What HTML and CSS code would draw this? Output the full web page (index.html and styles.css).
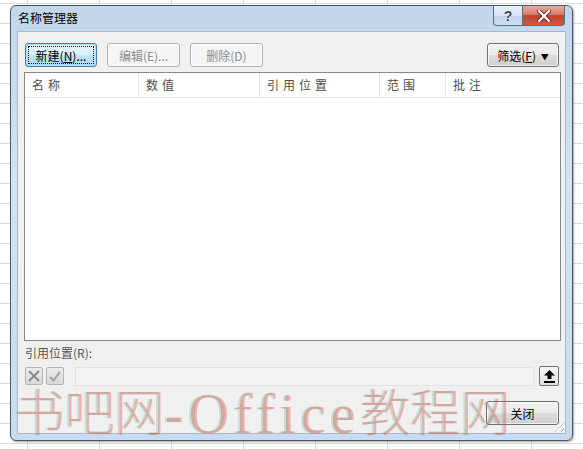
FILE: index.html
```html
<!DOCTYPE html>
<html lang="zh-CN">
<head>
    <meta charset="UTF-8">
    <title>名称管理器</title>
    <link rel="stylesheet" href="styles.css">
</head>
<body>
    <div class="dialog">
        <div class="titlebar">
            <span class="title">名称管理器</span>
            <div class="caption-buttons">
                <button class="cap help">?</button>
                <button class="cap close">
                    <svg width="14" height="12" viewBox="0 0 14 12">
                        <path d="M2 1 L12 11 M12 1 L2 11" stroke="#5a1f1f" stroke-width="4" stroke-linecap="round"/>
                        <path d="M2 1 L12 11 M12 1 L2 11" stroke="#fff" stroke-width="2.4" stroke-linecap="round"/>
                    </svg>
                </button>
            </div>
        </div>

        <div class="client">
            <div class="toolbar">
                <button class="btn btn-default"><span class="focus">新建(<u>N</u>)...</span></button>
                <button class="btn" disabled>编辑(E)...</button>
                <button class="btn" disabled>删除(D)</button>
                <span class="spacer"></span>
                <button class="btn btn-filter">筛选(<u>F</u>) <span class="arrow">&#9660;</span></button>
            </div>

            <div class="listbox">
                <div class="list-head">
                    <div class="col">名称</div>
                    <div class="col">数值</div>
                    <div class="col">引用位置</div>
                    <div class="col">范围</div>
                    <div class="col">批注</div>
                </div>
            </div>

            <div class="ref-label">引用位置(R):</div>
            <div class="ref-row">
                <button class="icon-btn" disabled>
                    <svg width="14" height="14" viewBox="0 0 14 14">
                        <path d="M2 2 L12 12 M12 2 L2 12" stroke="#8a8a8a" stroke-width="2"/>
                    </svg>
                </button>
                <button class="icon-btn" disabled>
                    <svg width="14" height="14" viewBox="0 0 14 14">
                        <path d="M2 8 L5.5 11.5 L12 3" stroke="#a8a8a8" stroke-width="2.4" fill="none"/>
                    </svg>
                </button>
                <div class="ref-input"></div>
                <button class="up-btn">
                    <svg width="11" height="13" viewBox="0 0 11 13">
                        <path d="M5.5 0 L11 5.5 L7.5 5.5 L7.5 9 L3.5 9 L3.5 5.5 L0 5.5 Z" fill="#000"/>
                        <rect x="0" y="11" width="11" height="2" fill="#000"/>
                    </svg>
                </button>
            </div>

            <div class="footer">
                <button class="btn btn-close">关闭</button>
            </div>
            <div class="grip"></div>
        </div>

        <div class="watermark">书吧网<span class="latin">-Office</span>教程网</div>
    </div>
</body>
</html>
```

FILE: styles.css
```css
body {
    margin: 0;
    height: 449px;
    overflow: hidden;
    font-family: "Noto Sans CJK SC", "Microsoft YaHei", sans-serif;
    font-size: 12px;
    background-color: #fff;
    background-image:
        linear-gradient(to right, #dadcdd 1px, transparent 1px),
        linear-gradient(to bottom, #dadcdd 1px, transparent 1px);
    background-size: 72px 100%, 100% 20px;
    background-position: 27px 0, 0 3px;
}

.dialog {
    position: relative;
    box-sizing: border-box;
    width: 563px;
    height: 436px;
    margin: 5px 0 0 10px;
    border: 1px solid #4b5866;
    border-radius: 6px;
    background: linear-gradient(180deg, #c2d6ee 0%, #d3e2f4 40%, #c9dbf0 100%);
    box-shadow: 1px 1px 2px rgba(0, 0, 0, 0.35);
    display: flex;
    flex-direction: column;
}

.titlebar {
    height: 25px;
    display: flex;
    justify-content: space-between;
    align-items: flex-start;
    padding: 0 7px 0 7px;
}

.title {
    color: #000;
    font-size: 12px;
    line-height: 24px;
}

.caption-buttons {
    display: flex;
}

.cap {
    height: 20px;
    margin: 0;
    padding: 0;
    border: 1px solid #5f6d7e;
    border-top: none;
    cursor: default;
    display: flex;
    align-items: center;
    justify-content: center;
}

.cap.help {
    width: 29px;
    border-right: none;
    border-radius: 0 0 0 4px;
    background: linear-gradient(180deg, #e9f1fa 0%, #d5e3f3 50%, #bfd3ea 51%, #cfdff1 100%);
    color: #3b4b5b;
    font-family: "Liberation Sans", sans-serif;
    font-size: 14px;
    font-weight: bold;
    text-shadow: 0 0 2px #fff;
}

.cap.close {
    width: 43px;
    border-radius: 0 0 4px 0;
    background: linear-gradient(180deg, #e9a99c 0%, #d47a6a 45%, #c2412f 50%, #d4573f 100%);
}

.client {
    flex: 1;
    margin: 0 6px 6px 6px;
    border: 1px solid #a7b8cb;
    background: #f0f0f0;
    padding: 11px 4px 0 6px;
    display: flex;
    flex-direction: column;
    position: relative;
}

.toolbar {
    display: flex;
    align-items: center;
    height: 24px;
}

.btn {
    box-sizing: border-box;
    height: 24px;
    width: 73px;
    padding: 0;
    margin: 0;
    font-family: "Noto Sans CJK SC", sans-serif;
    font-size: 12px;
    color: #000;
    border: 1px solid #707070;
    border-radius: 3px;
    background: linear-gradient(180deg, #f2f2f2 0%, #ebebeb 50%, #dddddd 51%, #cfcfcf 100%);
    box-shadow: inset 0 0 0 1px rgba(255, 255, 255, 0.7);
}

.btn u {
    text-decoration: underline;
}

.btn:disabled {
    color: #8d8d8d;
    border-color: #adb2b5;
    background: #f4f4f4;
}

.toolbar .btn {
    margin-left: 1px;
}

.toolbar .btn + .btn {
    margin-left: 10px;
}

.btn-default {
    width: 72px;
    border-color: #3c7fb1;
    background: linear-gradient(180deg, #eaf6fd 0%, #d9f0fc 50%, #bee6fd 51%, #a7d9f5 100%);
    box-shadow: inset 0 0 0 1px #b8e0f5;
    padding: 2px;
}

.btn-default .focus {
    display: block;
    height: 100%;
    box-sizing: border-box;
    border: 1px dotted #000;
    line-height: 17px;
}

.spacer {
    flex: 1;
}

.toolbar .btn-filter {
    width: 72px;
    margin-right: 2px;
}

.arrow {
    font-size: 8px;
    vertical-align: 1px;
    margin-left: 2px;
}

.listbox {
    box-sizing: border-box;
    height: 269px;
    margin-top: 5px;
    border: 1px solid #828790;
    background: #fff;
}

.list-head {
    display: grid;
    grid-template-columns: 114px 121px 120px 66px 1fr;
    height: 24px;
    border-bottom: 1px solid #e5e5e5;
}

.col {
    border-right: 1px solid #e5e5e5;
    padding-left: 7px;
    line-height: 24px;
    color: #4d4d4d;
    letter-spacing: 4px;
    font-size: 12px;
}

.col:last-child {
    border-right: none;
}

.ref-label {
    margin-top: 3px;
    line-height: 18px;
    color: #555;
    padding-left: 1px;
}

.ref-row {
    display: flex;
    align-items: center;
    height: 20px;
    margin-top: 4px;
    padding-left: 1px;
}

.icon-btn {
    box-sizing: border-box;
    width: 18px;
    height: 18px;
    padding: 0;
    margin: 0 3px 0 0;
    border: 1px solid #b5b5b5;
    border-radius: 2px;
    background: linear-gradient(180deg, #ececec, #d8d8d8);
    display: flex;
    align-items: center;
    justify-content: center;
}

.ref-input {
    flex: 1;
    height: 19px;
    margin: 0 5px 0 8px;
    box-sizing: border-box;
    border: 1px solid #e2e2e2;
    background: #f2f2f2;
}

.up-btn {
    box-sizing: border-box;
    width: 20px;
    height: 20px;
    padding: 0;
    margin: 0 2px 0 0;
    border: 1px solid #707070;
    border-radius: 2px;
    background: linear-gradient(180deg, #f6f6f6, #dedede);
    display: flex;
    align-items: center;
    justify-content: center;
}

.footer {
    display: flex;
    justify-content: flex-end;
    margin-top: 15px;
}

.btn-close {
    width: 73px;
    margin-right: 2px;
}

.grip {
    position: absolute;
    right: 1px;
    bottom: 1px;
    width: 9px;
    height: 9px;
    background: repeating-linear-gradient(135deg, transparent 0 2px, #a0a0a0 2px 3px, #fff 3px 4px);
    clip-path: polygon(100% 0, 100% 100%, 0 100%);
}

/* водяной знак поверх окна */
.watermark {
    position: absolute;
    left: 4px;
    top: 378px;
    font-family: "Noto Sans CJK SC", sans-serif;
    font-weight: 300;
    font-size: 50px;
    line-height: 50px;
    white-space: nowrap;
    color: rgba(226, 70, 70, 0.36);
    text-shadow: -2px 0 rgba(40, 170, 110, 0.22);
    pointer-events: none;
}

.watermark .latin {
    font-family: "Liberation Serif", serif;
    font-size: 56px;
    letter-spacing: 5px;
    vertical-align: -2px;
}
```
